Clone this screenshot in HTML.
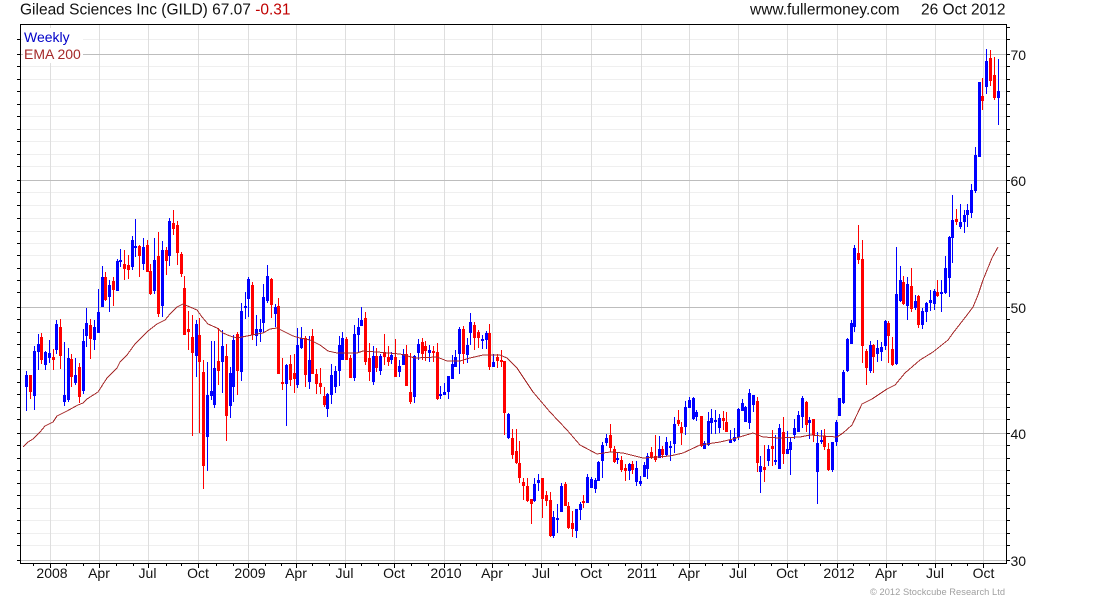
<!DOCTYPE html>
<html>
<head>
<meta charset="utf-8">
<title>Gilead Sciences Inc (GILD)</title>
<style>
html,body{margin:0;padding:0;background:#fff;width:1100px;height:600px;overflow:hidden}
svg{display:block}
text{font-family:"Liberation Sans",Arial,sans-serif}
</style>
</head>
<body>
<svg width="1100" height="600" viewBox="0 0 1100 600" xmlns="http://www.w3.org/2000/svg">
<rect width="1100" height="600" fill="#fff"/>
<g shape-rendering="crispEdges" fill="none">
<path stroke="#efefef" d="M21 39.5H1006M21 66.5H1006M21 79.5H1006M21 91.5H1006M21 104.5H1006M21 116.5H1006M21 129.5H1006M21 141.5H1006M21 154.5H1006M21 166.5H1006M21 192.5H1006M21 205.5H1006M21 218.5H1006M21 231.5H1006M21 243.5H1006M21 255.5H1006M21 268.5H1006M21 280.5H1006M21 292.5H1006M21 319.5H1006M21 332.5H1006M21 344.5H1006M21 357.5H1006M21 369.5H1006M21 382.5H1006M21 394.5H1006M21 407.5H1006M21 419.5H1006M21 445.5H1006M21 458.5H1006M21 470.5H1006M21 483.5H1006M21 495.5H1006M21 508.5H1006M21 520.5H1006M21 533.5H1006M21 545.5H1006"/>
<path stroke="#dedede" d="M50.5 25V563M99.5 25V563M148.5 25V563M198.5 25V563M248.5 25V563M296.5 25V563M345.5 25V563M394.5 25V563M444.5 25V563M492.5 25V563M541.5 25V563M591.5 25V563M641.5 25V563M689.5 25V563M738.5 25V563M787.5 25V563M837.5 25V563M886.5 25V563M935.5 25V563M983.5 25V563"/>
<path stroke="#bdbdbd" d="M21 54.5H1006M21 180.5H1006M21 307.5H1006M21 433.5H1006M21 560.5H1006"/>
</g>
<rect x="23" y="28" width="60" height="35" fill="#fff"/>
<g shape-rendering="crispEdges" fill="none">
<path stroke="#0000ff" d="M26.5 371V411M34.5 346V410M38.5 334V370M45.5 351V370M49.5 340V363M56.5 320V354M64.5 342V406M68.5 348V402M75.5 358V385M83.5 329V394M86.5 308V347M94.5 320V350M98.5 289V333M102.5 266V307M109.5 280V312M117.5 259V291M120.5 249V267M132.5 236V270M135.5 219V257M143.5 238V270M154.5 238V294M162.5 241V317M169.5 218V266M196.5 320V377M207.5 362V471M211.5 341V400M214.5 341V408M222.5 330V393M230.5 367V418M233.5 335V402M241.5 303V381M245.5 292V319M248.5 277V317M256.5 315V346M260.5 319V342M263.5 284V333M267.5 265V303M275.5 304V327M286.5 364V426M297.5 328V388M301.5 327V349M309.5 336V389M327.5 393V417M331.5 364V404M335.5 366V393M339.5 336V386M342.5 332V360M354.5 325V381M358.5 318V352M361.5 307V326M373.5 346V385M380.5 354V375M391.5 352V364M399.5 360V377M403.5 349V365M414.5 355V403M418.5 339V360M429.5 345V362M440.5 386V399M444.5 383V395M448.5 376V399M452.5 355V379M455.5 350V367M459.5 327V374M467.5 338V363M470.5 313V345M482.5 335V349M486.5 331V349M493.5 354V367M508.5 413V439M534.5 478V502M538.5 474V491M553.5 511V538M557.5 504V533M561.5 483V512M576.5 509V538M580.5 502V520M587.5 474V503M591.5 477V488M595.5 478V493M598.5 461V481M602.5 442V478M606.5 434V446M617.5 452V464M629.5 463V480M636.5 461V486M640.5 476V486M644.5 462V477M647.5 453V479M659.5 436V458M666.5 437V456M670.5 441V461M674.5 417V453M685.5 401V435M689.5 397V408M693.5 397V420M696.5 410V421M704.5 441V449M708.5 412V446M711.5 409V434M715.5 410V434M719.5 414V433M730.5 430V443M734.5 428V442M738.5 408V440M742.5 399V411M745.5 406V422M749.5 389V429M753.5 395V412M760.5 456V493M768.5 445V466M775.5 435V465M779.5 424V469M787.5 431V454M790.5 438V475M794.5 419V439M798.5 411V432M802.5 396V428M809.5 417V439M817.5 432V504M821.5 430V444M832.5 442V472M836.5 420V446M839.5 398V416M843.5 370V404M847.5 338V372M851.5 320V344M854.5 245V332M870.5 341V373M877.5 340V362M881.5 342V361M885.5 320V350M896.5 247V365M900.5 266V302M907.5 277V320M915.5 295V310M922.5 308V329M926.5 302V322M930.5 290V311M934.5 289V310M941.5 280V312M945.5 256V294M949.5 236V297M952.5 195V263M960.5 204V229M964.5 210V233M967.5 204V227M971.5 184V218M975.5 147V193M979.5 82V157M986.5 49V94M998.5 59V125"/>
<path stroke="#0000ff" stroke-width="3" d="M26.5 375V387M34.5 351V396M38.5 344V352M45.5 352V365M49.5 353V358M56.5 324V350M64.5 395V402M68.5 358V400M75.5 375V383M83.5 341V391M86.5 323V336M94.5 327V340M98.5 312V333M102.5 277V307M109.5 285V297M117.5 261V291M120.5 260V262M132.5 240V267M135.5 246V248M143.5 247V264M154.5 260V291M162.5 250V306M169.5 221V256M196.5 324V356M207.5 395V437M211.5 391V396M214.5 368V405M222.5 346V362M230.5 373V406M233.5 340V387M241.5 311V372M245.5 306V308M248.5 279V299M256.5 329V336M260.5 329V332M263.5 297V323M267.5 276V301M275.5 307V314M286.5 365V384M297.5 345V385M301.5 338V348M309.5 360V382M327.5 394V409M331.5 375V395M335.5 371V387M339.5 345V371M342.5 338V360M354.5 334V378M358.5 327V335M361.5 320V326M373.5 356V382M380.5 356V371M391.5 355V360M399.5 366V372M403.5 354V365M414.5 356V397M418.5 344V353M429.5 350V353M440.5 394V396M444.5 392V395M448.5 376V392M452.5 364V379M455.5 357V367M459.5 329V354M467.5 345V355M470.5 322V333M482.5 339V341M486.5 333V340M493.5 362V367M508.5 414V438M534.5 484V501M538.5 480V483M553.5 517V536M557.5 518V520M561.5 486V512M576.5 509V531M580.5 504V510M587.5 477V503M591.5 479V488M595.5 480V489M598.5 462V481M602.5 445V461M606.5 438V443M617.5 458V460M629.5 464V471M636.5 468V482M640.5 481V484M644.5 465V477M647.5 456V469M659.5 449V458M666.5 442V455M670.5 446V448M674.5 424V444M685.5 407V427M689.5 400V408M693.5 398V419M696.5 412V417M704.5 443V449M708.5 421V445M711.5 418V423M715.5 420V422M719.5 418V428M730.5 440V443M734.5 437V441M738.5 409V437M742.5 403V411M745.5 407V422M749.5 393V423M753.5 395V405M760.5 466V472M768.5 449V461M775.5 460V462M779.5 428V469M787.5 449V454M790.5 442V450M794.5 428V435M798.5 415V432M802.5 398V417M809.5 420V423M817.5 443V472M821.5 440V442M832.5 442V470M836.5 422V442M839.5 398V416M843.5 372V403M847.5 339V371M851.5 323V344M854.5 248V327M870.5 345V371M877.5 348V354M881.5 347V352M885.5 321V346M896.5 294V364M900.5 280V301M907.5 284V306M915.5 301V308M922.5 311V325M926.5 303V312M930.5 300V303M934.5 291V304M941.5 292V294M945.5 268V293M949.5 237V278M952.5 220V238M960.5 222V227M964.5 215V222M967.5 210V215M971.5 190V213M975.5 155V191M979.5 82V157M986.5 61V87M998.5 91V98"/>
<path stroke="#ff0000" d="M30.5 375V399M41.5 333V364M53.5 349V370M60.5 319V369M71.5 354V387M79.5 363V403M90.5 319V359M105.5 272V301M113.5 277V306M124.5 250V280M128.5 255V279M139.5 245V277M147.5 240V272M150.5 264V295M158.5 232V317M166.5 247V275M173.5 210V235M177.5 221V265M181.5 252V277M184.5 276V335M188.5 311V350M192.5 315V436M199.5 318V433M203.5 360V489M218.5 328V385M226.5 344V441M237.5 332V395M252.5 282V340M271.5 278V318M278.5 298V374M282.5 358V390M290.5 355V386M294.5 354V393M305.5 336V387M312.5 329V374M316.5 369V394M320.5 368V394M324.5 387V407M346.5 337V360M350.5 355V378M365.5 312V365M369.5 343V381M376.5 348V372M384.5 334V365M388.5 346V366M395.5 339V377M406.5 345V386M410.5 353V404M422.5 338V360M425.5 341V361M433.5 346V362M437.5 343V400M463.5 326V364M474.5 322V350M478.5 330V348M489.5 324V370M497.5 354V368M501.5 350V367M504.5 361V435M512.5 429V459M516.5 429V464M519.5 441V483M523.5 478V500M527.5 478V502M531.5 499V524M542.5 478V518M546.5 491V506M550.5 492V537M565.5 482V506M568.5 502V529M572.5 511V537M583.5 495V508M610.5 424V452M614.5 446V463M621.5 456V472M625.5 464V481M632.5 461V474M651.5 447V459M655.5 435V462M662.5 446V458M678.5 410V426M681.5 422V445M701.5 416V447M723.5 411V430M726.5 412V432M757.5 397V472M764.5 445V482M772.5 430V466M783.5 417V464M806.5 401V432M813.5 419V442M824.5 429V450M828.5 443V471M858.5 225V264M862.5 240V363M866.5 349V385M873.5 344V373M888.5 321V363M892.5 337V366M903.5 276V305M911.5 268V312M918.5 295V328M937.5 280V297M956.5 209V225M982.5 78V110M990.5 50V86M994.5 57V100"/>
<path stroke="#ff0000" stroke-width="3" d="M30.5 375V392M41.5 337V360M53.5 357V360M60.5 327V356M71.5 359V377M79.5 367V397M90.5 325V339M105.5 277V300M113.5 281V290M124.5 264V269M128.5 265V270M139.5 246V256M147.5 245V272M150.5 271V294M158.5 256V314M166.5 250V261M173.5 223V229M177.5 225V253M181.5 254V274M184.5 288V335M188.5 329V332M192.5 337V353M199.5 335V362M203.5 372V466M218.5 361V371M226.5 356V416M237.5 334V371M252.5 285V335M271.5 279V305M278.5 306V374M282.5 382V384M290.5 364V380M294.5 373V379M305.5 338V375M312.5 336V374M316.5 374V384M320.5 383V387M324.5 396V405M346.5 339V360M350.5 358V378M365.5 318V362M369.5 358V372M376.5 356V368M384.5 352V357M388.5 357V362M395.5 357V377M406.5 354V386M410.5 392V402M422.5 342V354M425.5 346V351M433.5 351V353M437.5 352V399M463.5 329V354M474.5 325V338M478.5 332V338M489.5 333V367M497.5 357V361M501.5 360V362M504.5 361V413M512.5 438V455M516.5 451V463M519.5 463V478M523.5 482V486M527.5 486V501M531.5 499V504M542.5 478V499M546.5 495V501M550.5 500V536M565.5 484V506M568.5 506V528M572.5 523V529M583.5 501V503M610.5 435V448M614.5 449V462M621.5 460V470M625.5 468V471M632.5 464V470M651.5 452V457M655.5 456V460M662.5 449V455M678.5 420V424M681.5 427V433M701.5 416V446M723.5 418V421M726.5 422V432M757.5 401V463M764.5 467V470M772.5 446V449M783.5 432V454M806.5 402V425M813.5 419V435M824.5 436V447M828.5 449V470M858.5 253V260M862.5 259V346M866.5 351V368M873.5 345V357M888.5 323V336M892.5 349V365M903.5 282V304M911.5 286V309M918.5 296V325M937.5 292V296M956.5 219V222M982.5 96V101M990.5 58V81M994.5 75V98"/>
</g>
<polyline fill="none" stroke="#a52a2a" stroke-width="1" shape-rendering="crispEdges" points="23,447 28,442 33,439 40,432 45,426 53,422 57,416 67,411 78,405 83,403 87,399 98,392 107,378 117,368 120,362 127,355 135,344 148,331 157,324 165,320 170,314 177,307 183,304 190,307 197,310 202,317 208,324 217,328 223,333 230,336 237,338 247,336 257,334 263,333 270,329 277,328 283,331 293,336 300,338 310,340 320,345 328,351 337,353 357,353 363,351 377,352 400,354 415,358 437,357 447,361 460,361 470,358 483,355 500,355 507,358 517,368 533,392 550,412 567,430 580,445 597,454 610,452 623,453 643,458 657,457 670,456 683,453 700,445 720,442 733,439 753,433 763,437 780,438 800,437 810,435 822,436 837,437 843,433 852,425 862,404 872,399 887,389 895,385 905,373 920,360 933,352 948,340 953,333 967,315 973,307 978,295 983,280 992,258 998,247"/>
<g shape-rendering="crispEdges" fill="none" stroke="#000">
<path d="M20.5 24.5H1006.5V563.5H20.5Z"/>
<path d="M17 39H20M17 54H20M17 66H20M17 79H20M17 91H20M17 104H20M17 116H20M17 129H20M17 141H20M17 154H20M17 166H20M17 180H20M17 192H20M17 205H20M17 218H20M17 231H20M17 243H20M17 255H20M17 268H20M17 280H20M17 292H20M17 307H20M17 319H20M17 332H20M17 344H20M17 357H20M17 369H20M17 382H20M17 394H20M17 407H20M17 419H20M17 433H20M17 445H20M17 458H20M17 470H20M17 483H20M17 495H20M17 508H20M17 520H20M17 533H20M17 545H20M17 560H20" transform="translate(0 .5)"/>
<path d="M1007 27H1010M1007 39H1010M1007 54H1010M1007 66H1010M1007 79H1010M1007 91H1010M1007 104H1010M1007 116H1010M1007 129H1010M1007 141H1010M1007 154H1010M1007 166H1010M1007 180H1010M1007 192H1010M1007 205H1010M1007 218H1010M1007 231H1010M1007 243H1010M1007 255H1010M1007 268H1010M1007 280H1010M1007 292H1010M1007 307H1010M1007 319H1010M1007 332H1010M1007 344H1010M1007 357H1010M1007 369H1010M1007 382H1010M1007 394H1010M1007 407H1010M1007 419H1010M1007 433H1010M1007 445H1010M1007 458H1010M1007 470H1010M1007 483H1010M1007 495H1010M1007 508H1010M1007 520H1010M1007 533H1010M1007 545H1010M1007 560H1010" transform="translate(0 .5)"/>
<path d="M33.5 564V566M50.5 564V568M66.5 564V566M83.5 564V566M99.5 564V568M116.5 564V566M133.5 564V566M148.5 564V568M166.5 564V566M181.5 564V566M198.5 564V568M216.5 564V566M233.5 564V566M248.5 564V568M265.5 564V566M281.5 564V566M296.5 564V568M312.5 564V566M329.5 564V566M345.5 564V568M361.5 564V566M378.5 564V566M394.5 564V568M411.5 564V566M428.5 564V566M444.5 564V568M460.5 564V566M476.5 564V566M492.5 564V568M508.5 564V566M525.5 564V566M541.5 564V568M558.5 564V566M575.5 564V566M591.5 564V568M608.5 564V566M625.5 564V566M641.5 564V568M657.5 564V566M673.5 564V566M689.5 564V568M705.5 564V566M722.5 564V566M738.5 564V568M754.5 564V566M771.5 564V566M787.5 564V568M804.5 564V566M820.5 564V566M837.5 564V568M853.5 564V566M869.5 564V566M886.5 564V568M902.5 564V566M918.5 564V566M935.5 564V568M951.5 564V566M967.5 564V566M983.5 564V568"/>
</g>
<text x="20" y="14.5" font-size="15.5" fill="#111">Gilead Sciences Inc (GILD) 67.07 <tspan fill="#c00000">-0.31</tspan></text>
<text x="750" y="14.5" font-size="15.5" fill="#111">www.fullermoney.com</text>
<text x="921" y="14.5" font-size="15.5" fill="#111">26 Oct 2012</text>
<text x="24" y="42" font-size="14" fill="#0000c8">Weekly</text>
<text x="24" y="59" font-size="14" fill="#a52a2a">EMA 200</text>
<g font-size="14" fill="#111">
<text x="1010.5" y="60">70</text>
<text x="1010.5" y="186">60</text>
<text x="1010.5" y="313">50</text>
<text x="1010.5" y="439">40</text>
<text x="1010.5" y="566">30</text>
</g>
<g font-size="14" fill="#111" text-anchor="middle">
<text x="52" y="578">2008</text>
<text x="99" y="578">Apr</text>
<text x="147.5" y="578">Jul</text>
<text x="198" y="578">Oct</text>
<text x="250" y="578">2009</text>
<text x="296" y="578">Apr</text>
<text x="344.5" y="578">Jul</text>
<text x="394" y="578">Oct</text>
<text x="446" y="578">2010</text>
<text x="492" y="578">Apr</text>
<text x="541" y="578">Jul</text>
<text x="591" y="578">Oct</text>
<text x="642" y="578">2011</text>
<text x="689" y="578">Apr</text>
<text x="738" y="578">Jul</text>
<text x="787" y="578">Oct</text>
<text x="839" y="578">2012</text>
<text x="886" y="578">Apr</text>
<text x="935" y="578">Jul</text>
<text x="983.5" y="578">Oct</text>
</g>
<text x="870" y="595" font-size="9.3" fill="#a0a0a0" textLength="135" lengthAdjust="spacing">© 2012 Stockcube Research Ltd</text>
</svg>
</body>
</html>
